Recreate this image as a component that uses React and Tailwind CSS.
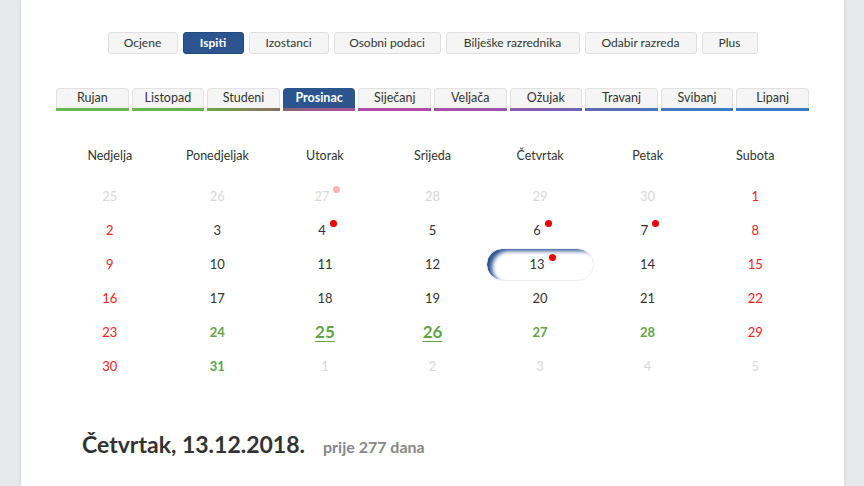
const topNav = [
  { label: "Ocjene", w: "w-[70px]" },
  { label: "Ispiti", w: "w-[61px]", active: true },
  { label: "Izostanci", w: "w-[80px]" },
  { label: "Osobni podaci", w: "w-[107px]" },
  { label: "Bilješke razrednika", w: "w-[134px]" },
  { label: "Odabir razreda", w: "w-[112px]" },
  { label: "Plus", w: "w-[56px]" },
];

const months = [
  { label: "Rujan", bar: "bg-linear-to-r from-[#6cb84c] to-[#6cb84c]" },
  { label: "Listopad", bar: "bg-linear-to-r from-[#6cb84c] to-[#6aae48]" },
  { label: "Studeni", bar: "bg-linear-to-r from-[#6aa848] to-[#8a6e5e]" },
  { label: "Prosinac", bar: "bg-linear-to-r from-[#8a6270] to-[#a8509e]", active: true },
  { label: "Siječanj", bar: "bg-linear-to-r from-[#b04ca8] to-[#b04ca8]" },
  { label: "Veljača", bar: "bg-linear-to-r from-[#a850a8] to-[#9656ae]" },
  { label: "Ožujak", bar: "bg-linear-to-r from-[#8c5ab0] to-[#6e64b2]" },
  { label: "Travanj", bar: "bg-linear-to-r from-[#6068b4] to-[#4a74be]" },
  { label: "Svibanj", bar: "bg-linear-to-r from-[#4678c0] to-[#3c7cc6]" },
  { label: "Lipanj", bar: "bg-linear-to-r from-[#3a7cc8] to-[#3a7cc8]" },
];

const days = ["Nedjelja", "Ponedjeljak", "Utorak", "Srijeda", "Četvrtak", "Petak", "Subota"];

// t: o = other month, r = weekend, n = normal, g = green exam, b = big green link
const weeks = [
  [["25", "o"], ["26", "o"], ["27", "o", "pale"], ["28", "o"], ["29", "o"], ["30", "o"], ["1", "r"]],
  [["2", "r"], ["3", "n"], ["4", "n", "dot"], ["5", "n"], ["6", "n", "dot"], ["7", "n", "dot"], ["8", "r"]],
  [["9", "r"], ["10", "n"], ["11", "n"], ["12", "n"], ["13", "n", "dot", true], ["14", "n"], ["15", "r"]],
  [["16", "r"], ["17", "n"], ["18", "n"], ["19", "n"], ["20", "n"], ["21", "n"], ["22", "r"]],
  [["23", "r"], ["24", "g"], ["25", "b"], ["26", "b"], ["27", "g"], ["28", "g"], ["29", "r"]],
  [["30", "r"], ["31", "g"], ["1", "o"], ["2", "o"], ["3", "o"], ["4", "o"], ["5", "o"]],
];

const numStyle = {
  o: "text-[13px] text-[#d9d9d9]",
  r: "text-[13px] text-[#f41c1c]",
  n: "text-[13px] text-[#333]",
  g: "text-[13px] font-bold text-[#62a446]",
  b: "text-[17px] font-bold text-[#62a446] underline underline-offset-[3px]",
};

function DayCell({ num, type, dot, selected }) {
  return (
    <div className="h-[34px] flex items-center justify-center">
      <div
        className={
          selected
            ? "w-full h-[33px] rounded-full border border-[#eceef3] flex items-center justify-center shadow-[inset_6px_3px_4px_-1px_#2a5290]"
            : "w-full h-full flex items-center justify-center"
        }
      >
        <span className={`relative leading-[18px] ${dot ? "pr-[6px]" : ""} ${numStyle[type]}`}>
          {num}
          {dot && (
            <span
              className={
                dot === "pale"
                  ? "absolute right-[-5px] top-[-1px] w-[7px] h-[7px] rounded-full bg-[#f9b4b4]"
                  : "absolute right-[-5px] top-[-1px] w-[7px] h-[7px] rounded-full bg-[#ee0000]"
              }
            />
          )}
        </span>
      </div>
    </div>
  );
}

export default function App() {
  return (
    <div className="w-full h-[486px] bg-[#e8e9ec] overflow-hidden font-['Lato',sans-serif]">
      <div className="ml-[21px] w-[823px] h-full bg-white shadow-[0_0_4px_rgba(0,0,0,0.12)]">
        {/* top navigation */}
        <div className="pt-[32px] flex justify-center gap-[5px]">
          {topNav.map((b) => (
            <div
              key={b.label}
              className={`${b.w} h-[22px] rounded-[3px] flex items-center justify-center text-[12px] ${
                b.active
                  ? "bg-[#2c5590] border border-[#24497c] text-white font-bold"
                  : "bg-[#f5f5f5] border border-[#e0e0e0] text-[#333]"
              }`}
            >
              {b.label}
            </div>
          ))}
        </div>

        {/* month tabs */}
        <div className="mt-[34px] mx-auto w-[753px] flex gap-[3px]">
          {months.map((m) => (
            <div key={m.label} className="flex-1 flex flex-col">
              <div
                className={`h-[20px] rounded-t-[4px] flex items-center justify-center text-[12.5px] ${
                  m.active
                    ? "bg-[#2c5590] text-white font-bold"
                    : "bg-[#f5f5f5] border border-b-0 border-[#e2e2e2] text-[#333]"
                }`}
              >
                {m.label}
              </div>
              <div className={`h-[3px] ${m.bar}`} />
            </div>
          ))}
        </div>

        {/* calendar */}
        <div className="mt-[35px] mx-auto w-[753px]">
          <div className="grid grid-cols-7 h-[20px] items-center">
            {days.map((d) => (
              <div key={d} className="text-center text-[12.5px] text-[#333]">
                {d}
              </div>
            ))}
          </div>
          <div className="mt-[13px]">
            {weeks.map((w, i) => (
              <div key={i} className="grid grid-cols-7">
                {w.map(([num, type, dot, selected], j) => (
                  <DayCell key={j} num={num} type={type} dot={dot} selected={selected} />
                ))}
              </div>
            ))}
          </div>
        </div>

        {/* selected day */}
        <div className="mt-[44px] pl-[61px] flex items-baseline gap-[18px]">
          <span className="text-[23px] font-bold text-[#333]">Četvrtak, 13.12.2018.</span>
          <span className="text-[16px] font-bold text-[#888]">prije 277 dana</span>
        </div>
      </div>
    </div>
  );
}
